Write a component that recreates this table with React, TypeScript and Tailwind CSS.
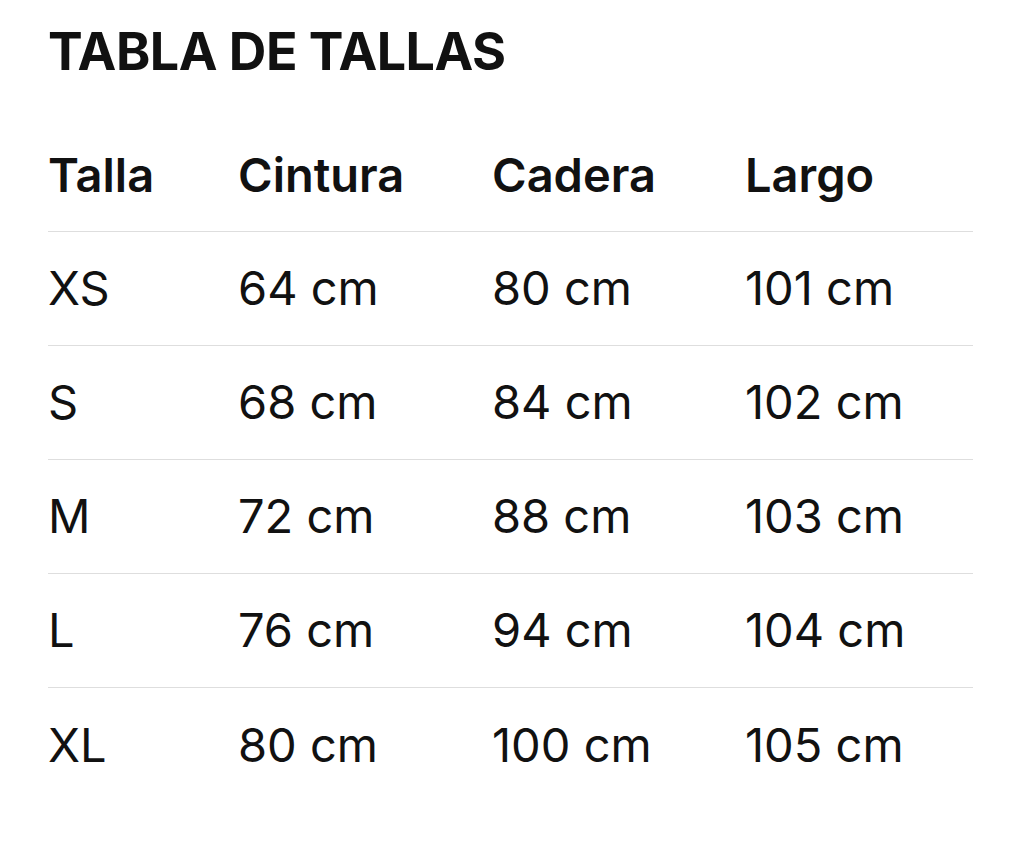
const rows = [
  ["XS", "64 cm", "80 cm", "101 cm"],
  ["S", "68 cm", "84 cm", "102 cm"],
  ["M", "72 cm", "88 cm", "103 cm"],
  ["L", "76 cm", "94 cm", "104 cm"],
  ["XL", "80 cm", "100 cm", "105 cm"],
];

const cols = "grid grid-cols-[190px_254px_253px_228px]";

export default function App() {
  return (
    <div className="min-h-[849px] w-[1024px] bg-white text-[#111111] font-['Inter',sans-serif] pl-[48px] pt-[24px]">
      <h1 className="text-[52px] leading-[56px] font-bold tracking-[-0.5px]">TABLA DE TALLAS</h1>
      <div className="w-[925px] mt-[52px]">
        <div className={`${cols} h-[100px] pb-[12px] items-center border-b border-[#dedede] text-[47px] font-semibold`}>
          <div>Talla</div>
          <div>Cintura</div>
          <div>Cadera</div>
          <div>Largo</div>
        </div>
        {rows.map((r, i) => (
          <div
            key={r[0]}
            className={`${cols} h-[114px] items-center text-[47px] ${i < rows.length - 1 ? "border-b border-[#dedede]" : ""}`}
          >
            {r.map((c, j) => (
              <div key={j}>{c}</div>
            ))}
          </div>
        ))}
      </div>
    </div>
  );
}
